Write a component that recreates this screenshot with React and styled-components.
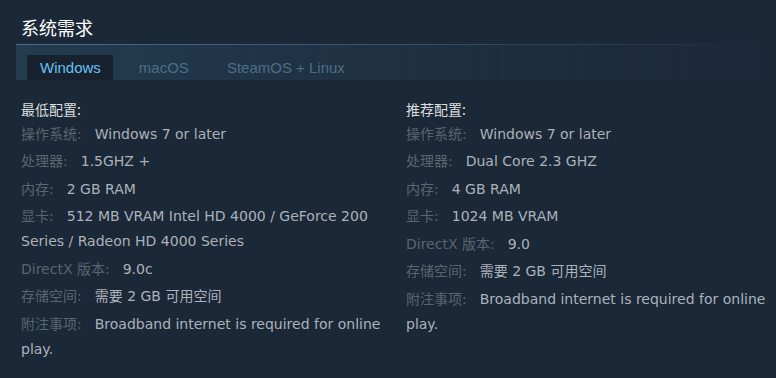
import styled, { createGlobalStyle } from "styled-components";

const GlobalStyle = createGlobalStyle`
  html, body {
    margin: 0;
    padding: 0;
    background: #1b2838;
  }
`;

const Page = styled.div`
  width: 776px;
  height: 378px;
  padding: 16px 0 0 16px;
  box-sizing: border-box;
  background: #1b2838;
  font-family: "DejaVu Sans", "Noto Sans CJK SC", sans-serif;
  overflow: hidden;
`;

const Title = styled.h2`
  margin: 0;
  padding: 0 0 5px 5px;
  font-size: 18px;
  font-weight: normal;
  line-height: 23px;
  color: #ffffff;
  font-family: "Noto Sans CJK SC", sans-serif;
`;

const TabStrip = styled.div`
  display: flex;
  gap: 13px;
  height: 36px;
  padding: 10px 0 0 11px;
  box-sizing: border-box;
  background: linear-gradient(to right, rgba(38, 66, 88, 0.75) 0%, rgba(34, 56, 76, 0.55) 45%, rgba(27, 40, 56, 0) 100%);
  border-top: 1px solid transparent;
  border-image: linear-gradient(to right, #4c6c85 0%, #3d5870 40%, rgba(61, 88, 112, 0.4) 75%, rgba(27, 40, 56, 0) 100%) 1;
`;

const Tab = styled.div`
  height: 25px;
  padding: 0 12px 0 13px;
  font-family: "Liberation Sans", Arial, sans-serif;
  font-size: 15px;
  line-height: 26px;
  color: ${(p) => (p.active ? "#67c1f5" : "#4e6d85")};
  background: ${(p) => (p.active ? "#18222e" : "transparent")};
`;

const Columns = styled.div`
  display: grid;
  grid-template-columns: 365px 365px;
  column-gap: 20px;
  padding: 18px 0 0 5px;
`;

const Column = styled.div`
  font-size: 14px;
  color: #acb2b8;
`;

const Heading = styled.div`
  font-family: "Noto Sans CJK SC", sans-serif;
  color: #dcdedf;
  font-size: 14px;
  line-height: 22px;
  margin-bottom: 1.5px;
`;

const List = styled.ul`
  list-style: none;
  margin: 0;
  padding: 0;
`;

const Item = styled.li`
  line-height: 25px;
  margin-bottom: 2.5px;
`;

const Label = styled.span`
  color: #58666f;
  line-height: 16px;
  margin-right: 13px;
`;

const Value = styled.span`
  color: #acb2b8;
  line-height: 16px;
`;

const minimum = [
  ["操作系统:", "Windows 7 or later"],
  ["处理器:", "1.5GHZ +"],
  ["内存:", "2 GB RAM"],
  ["显卡:", "512 MB VRAM Intel HD 4000 / GeForce 200 Series / Radeon HD 4000 Series"],
  ["DirectX 版本:", "9.0c"],
  ["存储空间:", "需要 2 GB 可用空间"],
  ["附注事项:", "Broadband internet is required for online play."],
];

const recommended = [
  ["操作系统:", "Windows 7 or later"],
  ["处理器:", "Dual Core 2.3 GHZ"],
  ["内存:", "4 GB RAM"],
  ["显卡:", "1024 MB VRAM"],
  ["DirectX 版本:", "9.0"],
  ["存储空间:", "需要 2 GB 可用空间"],
  ["附注事项:", "Broadband internet is required for online play."],
];

const ReqColumn = ({ heading, rows }) => (
  <Column>
    <Heading>{heading}</Heading>
    <List>
      {rows.map(([label, value]) => (
        <Item key={label}>
          <Label>{label}</Label>
          <Value>{value}</Value>
        </Item>
      ))}
    </List>
  </Column>
);

export default function App() {
  return (
    <Page>
      <GlobalStyle />
      <Title>系统需求</Title>
      <TabStrip>
        <Tab active>Windows</Tab>
        <Tab>macOS</Tab>
        <Tab>SteamOS + Linux</Tab>
      </TabStrip>
      <Columns>
        <ReqColumn heading="最低配置:" rows={minimum} />
        <ReqColumn heading="推荐配置:" rows={recommended} />
      </Columns>
    </Page>
  );
}
